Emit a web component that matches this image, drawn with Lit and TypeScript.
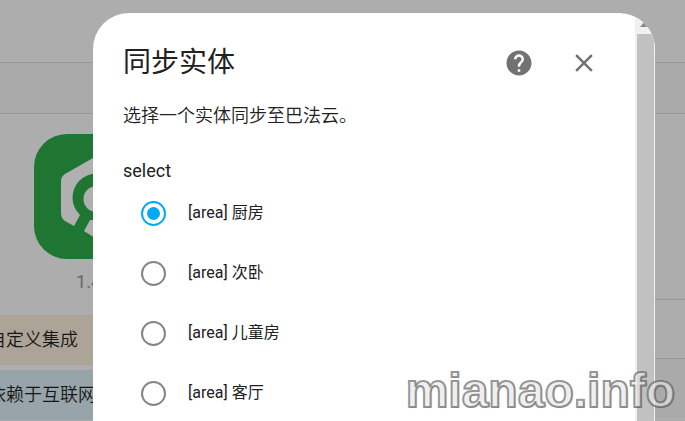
import { LitElement, html, css } from "lit";
import { customElement, state } from "lit/decorators.js";

@customElement("integration-page")
class IntegrationPage extends LitElement {
  static styles = css`
    :host {
      display: block;
      min-height: 100vh;
      background: #adadad;
      overflow: hidden;
    }
    .topbar {
      height: 62px;
    }
    .toolbar {
      height: 50px;
      border-top: 1px solid #979797;
      border-bottom: 1px solid #979797;
      background: #aaaaaa;
    }
    .columns {
      display: grid;
      grid-template-columns: 192px 1fr;
    }
    .summary {
      display: flex;
      flex-direction: column;
      align-items: center;
      padding-top: 20px;
    }
    .logo {
      width: 125px;
      height: 125px;
    }
    .version {
      margin: 10px 0 20px;
      font-size: 18px;
      line-height: 26px;
      color: #686868;
    }
    .notice {
      box-sizing: border-box;
      width: 100%;
      height: 50px;
      margin-bottom: 5px;
      line-height: 50px;
      font-size: 18px;
      font-weight: 350;
      white-space: nowrap;
      text-indent: -12px;
      color: #161616;
    }
    .custom {
      background: #ada498;
    }
    .cloud {
      background: #97a4a9;
    }
    .entries {
      padding-top: 185px;
    }
    .entry {
      height: 58px;
      border-top: 1px solid #979797;
    }
    .entry:last-child {
      background: #aaaaaa;
    }
  `;

  render() {
    return html`
      <div class="topbar"></div>
      <div class="toolbar"></div>
      <div class="columns">
        <div class="summary">
          <svg class="logo" viewBox="0 0 125 125" aria-hidden="true">
            <rect width="125" height="125" rx="33" fill="#1f7532" />
            <path
              d="M62.500 22 L31 40 Q27 43 27 47 V79 Q27 84 31 87 L40 92 L46 81 A24 24 0 1 1 79 81 L85 92 L94 87 Q98 84 98 79 V47 Q98 43 94 40Z"
              fill="#b0b0b0"
            />
            <circle cx="62.500" cy="65" r="13" fill="#b0b0b0" />
            <path d="M56 86 H69 L75 97 L62.500 105 L50 97Z" fill="#b0b0b0" />
          </svg>
          <div class="version">1.4.0</div>
          <div class="notice custom">自定义集成</div>
          <div class="notice cloud">依赖于互联网</div>
        </div>
        <div class="entries">
          <div class="entry"></div>
          <div class="entry"></div>
        </div>
      </div>
    `;
  }
}

@customElement("sync-dialog")
class SyncDialog extends LitElement {
  @state() private selected = 0;
  private areas = ["厨房", "次卧", "儿童房", "客厅"];

  static styles = css`
    :host {
      display: flex;
      overflow: hidden;
      border-radius: 36px 36px 0 0;
      background: #ffffff;
      color: #212121;
    }
    .content {
      flex: 1;
      min-width: 0;
      padding: 26px 30px 0;
    }
    header {
      display: flex;
      align-items: center;
      height: 48px;
    }
    h1 {
      flex: 1;
      margin: 0;
      font-size: 28px;
      font-weight: 400;
      line-height: 46px;
    }
    .icon {
      display: grid;
      place-items: center;
      width: 48px;
      height: 48px;
      margin-right: 17px;
      padding: 0;
      border: 0;
      background: none;
      color: #727272;
    }
    .icon:last-child {
      margin-right: -3px;
    }
    .icon svg {
      width: 30px;
      height: 30px;
      fill: currentColor;
    }
    p {
      margin: 15px 0 29px;
      font-size: 18px;
      font-weight: 350;
      line-height: 28px;
    }
    fieldset {
      margin: 0;
      padding: 0;
      border: 0;
    }
    legend {
      padding: 0;
      font-size: 18px;
      line-height: 24px;
    }
    label {
      display: flex;
      align-items: center;
      gap: 22px;
      height: 60px;
      padding-left: 18px;
      font-size: 16px;
      line-height: 20px;
    }
    input {
      display: grid;
      place-items: center;
      width: 25px;
      height: 25px;
      margin: 0;
      appearance: none;
      border: 2px solid #858585;
      border-radius: 50%;
    }
    input:checked {
      border-color: #03a9f4;
    }
    input:checked::before {
      content: "";
      width: 13px;
      height: 13px;
      border-radius: 50%;
      background: #03a9f4;
    }
    .scrollbar {
      display: flex;
      flex-direction: column;
      align-items: center;
      width: 20px;
      background: #f1f1f1;
    }
    .up {
      width: 18px;
      height: 21px;
      flex: none;
      fill: #8a8a8a;
    }
    .thumb {
      width: 17px;
      flex: 1;
      background: #c1c1c1;
    }
  `;

  render() {
    return html`
      <div class="content">
        <header>
          <h1>同步实体</h1>
          <button class="icon" aria-label="帮助">
            <svg viewBox="0 0 24 24">
              <path
                d="M15.07,11.25L14.17,12.17C13.45,12.89 13,13.5 13,15H11V14.5C11,13.39 11.45,12.39 12.17,11.67L13.41,10.41C13.78,10.05 14,9.55 14,9C14,7.89 13.1,7 12,7A2,2 0 0,0 10,9H8A4,4 0 0,1 12,5A4,4 0 0,1 16,9C16,9.88 15.64,10.67 15.07,11.25M13,19H11V17H13M12,2A10,10 0 0,0 2,12A10,10 0 0,0 12,22A10,10 0 0,0 22,12C22,6.47 17.5,2 12,2Z"
              />
            </svg>
          </button>
          <button class="icon" aria-label="关闭">
            <svg viewBox="0 0 24 24">
              <path
                d="M19,6.41L17.59,5L12,10.59L6.41,5L5,6.41L10.59,12L5,17.59L6.41,19L12,13.41L17.59,19L19,17.59L13.41,12L19,6.41Z"
              />
            </svg>
          </button>
        </header>
        <p>选择一个实体同步至巴法云。</p>
        <fieldset>
          <legend>select</legend>
          ${this.areas.map(
            (area, i) => html`
              <label>
                <input
                  type="radio"
                  name="area"
                  .checked=${this.selected === i}
                  @change=${() => (this.selected = i)}
                />
                <span>[area] ${area}</span>
              </label>
            `
          )}
        </fieldset>
      </div>
      <div class="scrollbar" aria-hidden="true">
        <svg class="up" viewBox="0 0 18 21"><path d="M4 14 L9 8 L14 14Z" /></svg>
        <div class="thumb"></div>
      </div>
    `;
  }
}

@customElement("app-root")
class AppRoot extends LitElement {
  static styles = css`
    :host {
      display: block;
      position: relative;
      height: 100vh;
      overflow: hidden;
      font-family: Roboto, "Noto Sans CJK SC", sans-serif;
    }
    .overlay {
      position: absolute;
      inset: 0;
      display: grid;
      padding: 13px 30px 0 93px;
    }
    .watermark {
      position: absolute;
      right: 10px;
      bottom: 2px;
      font: bold 48px/56px "Liberation Sans", sans-serif;
      color: rgba(255, 255, 255, 0.6);
      -webkit-text-stroke: 2px rgba(80, 80, 80, 0.6);
      text-shadow: 1px 1px 1px rgba(0, 0, 0, 0.15);
      pointer-events: none;
    }
  `;

  render() {
    return html`
      <integration-page></integration-page>
      <div class="overlay"><sync-dialog></sync-dialog></div>
      <div class="watermark">mianao.info</div>
    `;
  }
}
